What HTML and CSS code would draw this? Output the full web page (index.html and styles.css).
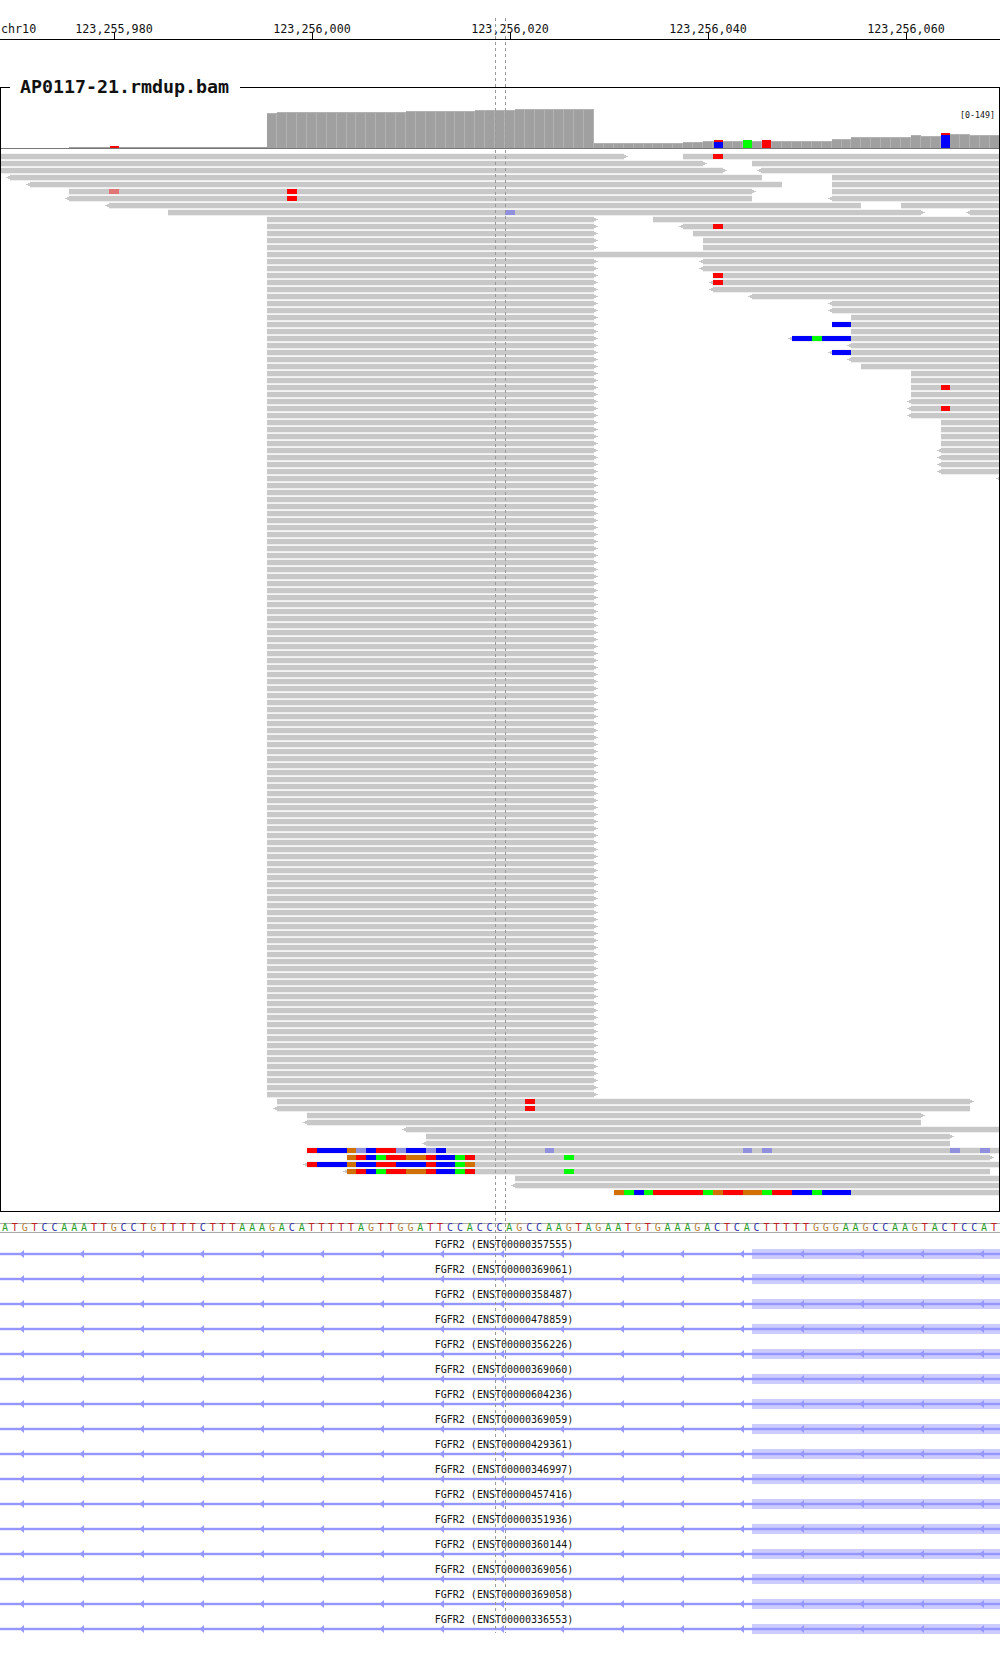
FILE: index.html
```html
<!DOCTYPE html>
<html lang="en">
<head>
    <meta charset="UTF-8">
    <meta name="viewport" content="width=device-width, initial-scale=1.0">
    <title>IGV snapshot</title>
    <link rel="stylesheet" href="styles.css">
</head>
<body>
    <div class="page">
        <div class="ruler">
            <div class="chrom">chr10</div>
            <div class="tick">123,255,980</div>
            <div class="tick">123,256,000</div>
            <div class="tick">123,256,020</div>
            <div class="tick">123,256,040</div>
            <div class="tick">123,256,060</div>
        </div>

        <fieldset class="track">
            <legend>AP0117-21.rmdup.bam</legend>
            <svg id="pileup" class="pileup" width="998" height="1114" viewBox="1 97 998 1114"></svg>
        </fieldset>

        <div id="sequence" class="sequence"></div>
        <div id="genes" class="genes"></div>

        <!-- center lines -->
        <div class="marker marker-left"></div>
        <div class="marker marker-right"></div>
    </div>

    <script src="app.js"></script>
</body>
</html>
```

FILE: styles.css
```css
body {
    margin: 0;
    background-color: #fff;
    color: #111;
    font-family: "DejaVu Sans Mono", monospace;
}

.page {
    position: relative;
    width: 1000px;
    height: 1653px;
    overflow: hidden;
}

.ruler {
    display: flex;
    height: 39px;
    padding-left: 15px;
    border-bottom: 1px solid #000;
    font-size: 11.7px;
    line-height: 14px;
}

.chrom {
    width: 0;
    margin-left: -14px;
    margin-right: 14px;
    padding-top: 22px;
}

.tick {
    position: relative;
    flex: 0 0 198px;
    padding-top: 22px;
    text-align: center;
}

.tick::after {
    content: "";
    position: absolute;
    left: 99px;
    bottom: 0;
    width: 1px;
    height: 7px;
    background-color: #000;
}

.track {
    margin: 37px 0 0;
    padding: 0;
    height: 1135px;
    box-sizing: border-box;
    border: 1px solid #000;
    min-width: 0;
}

.track legend {
    margin-left: 9px;
    padding: 0 10px;
    font-size: 18.3px;
    font-weight: bold;
    line-height: 20px;
    width: 230px;
    box-sizing: border-box;
}

.pileup {
    display: block;
    shape-rendering: crispEdges;
}

.range-label {
    font-family: "DejaVu Sans Mono", monospace;
    font-size: 8.3px;
    fill: #111;
}

.read { fill: #c8c8c8; shape-rendering: auto; }
.cov { fill: #a0a0a0; }
.cov-gap { fill: #b2b2b2; }
.baseline { fill: #777; }
.A { fill: #00ff00; }
.C { fill: #0000ff; }
.G { fill: #d17105; }
.T { fill: #ff0000; }
.P { fill: #9090dd; }
.K { fill: #e07575; }

.sequence {
    display: grid;
    grid-template-columns: repeat(101, 9.9px);
    height: 8px;
    margin-top: 11px;
    border-top: 1px solid #aaa;
    border-bottom: 1px solid #aaa;
    font-family: "DejaVu Sans Mono", monospace;
    font-size: 10px;
    line-height: 8px;
    text-align: center;
}

.base-A { color: #2a9d2a; }
.base-C { color: #2f2fa0; }
.base-G { color: #b57f3c; }
.base-T { color: #b82222; }

.genes {
    margin-top: 6px;
}

.gene {
    height: 25px;
}

.gene-name {
    height: 10px;
    padding-left: 8px;
    font-size: 10px;
    line-height: 12px;
    text-align: center;
}

.gene svg {
    display: block;
}

.exon { fill: #ccccff; }
.intron { fill: #9696ff; }

.marker {
    position: absolute;
    top: 18px;
    width: 1px;
    height: 1615px;
    background: repeating-linear-gradient(#999 0, #999 3px, transparent 3px, transparent 6px);
}

.marker-left { left: 495px; }
.marker-right { left: 505px; }
```

FILE: app.js
```js
const NS = 'http://www.w3.org/2000/svg';

function add(parent, tag, attrs) {
    const el = document.createElementNS(NS, tag);
    for (const key in attrs) {
        el.setAttribute(key, attrs[key]);
    }
    parent.appendChild(el);
    return el;
}

function box(parent, cls, x1, x2, y, h) {
    add(parent, 'rect', { class: cls, x: x1, y: y, width: x2 - x1, height: h });
}

const pileup = document.getElementById('pileup');

// coverage: [from, to, top]
const coverage = [
    [267, 277, 113], [277, 406, 112], [406, 475, 111], [475, 515, 110], [515, 594, 109],
    [594, 683, 143], [683, 703, 142], [703, 832, 141], [832, 851, 139], [851, 911, 137],
    [911, 921, 135], [921, 950, 136], [950, 970, 134], [970, 1000, 135]
];

box(pileup, 'cov', 69, 267, 147, 1);
coverage.forEach(function (c) {
    box(pileup, 'cov-gap', c[0], c[1], c[2], 148 - c[2]);
    for (let n = 0; n < 101; n++) {
        const a = Math.round(n * 9.9);
        const b = Math.round((n + 1) * 9.9) - 1;
        if (a >= c[0] - 1 && b <= c[1] + 1) {
            box(pileup, 'cov', a, b, c[2] + 1, 147 - c[2]);
        }
    }
});
box(pileup, 'baseline', 0, 1000, 148, 1);

box(pileup, 'T', 110, 119, 146, 2);
box(pileup, 'T', 714, 723, 140, 2);
box(pileup, 'C', 714, 723, 142, 6);
box(pileup, 'A', 743, 752, 140, 8);
box(pileup, 'T', 762, 771, 140, 8);
box(pileup, 'T', 941, 950, 133, 2);
box(pileup, 'C', 941, 950, 135, 13);

add(pileup, 'text', { class: 'range-label', x: 960, y: 118 }).textContent = '[0-149]';

// reads: [row, from, to, strand, marks], marks are [color, from, to]
const reads = [
    [0, 0, 624, '>'], [0, 683, 1000, '', [['T', 713, 723]]],
    [1, 0, 703, '>'], [1, 752, 1000],
    [2, 0, 723, '>'], [2, 761, 1000, '<'],
    [3, 10, 762, '<'], [3, 832, 1000],
    [4, 30, 782, '<'], [4, 832, 1000],
    [5, 69, 752, '>', [['K', 109, 119], ['T', 287, 297]]], [5, 832, 1000],
    [6, 69, 752, '<', [['T', 287, 297]]], [6, 832, 1000, '<'],
    [7, 109, 861, '<'], [7, 901, 1000],
    [8, 168, 921, '>', [['P', 505, 515]]], [8, 970, 1000, '<'],
    [9, 653, 1000],
    [10, 683, 1000, '<', [['T', 713, 723]]],
    [11, 693, 1000],
    [12, 703, 1000],
    [13, 703, 1000],
    [14, 267, 1000],
    [15, 703, 1000, '<'],
    [16, 703, 1000, '<'],
    [17, 713, 1000, '', [['T', 713, 723]]],
    [18, 713, 1000, '<', [['T', 713, 723]]],
    [19, 713, 1000, '<'],
    [20, 752, 1000, '<'],
    [21, 832, 1000, '<'],
    [22, 832, 1000, '<'],
    [23, 851, 1000],
    [24, 832, 1000, '', [['C', 832, 851]]],
    [25, 851, 1000],
    [26, 792, 1000, '<', [['C', 792, 812], ['A', 812, 822], ['C', 822, 851]]],
    [27, 851, 1000, '<'],
    [28, 832, 1000, '<', [['C', 832, 851]]],
    [29, 851, 1000, '<'],
    [30, 861, 1000],
    [31, 911, 1000],
    [32, 911, 1000],
    [33, 911, 1000, '', [['T', 941, 950]]],
    [34, 911, 1000],
    [35, 911, 1000, '<'],
    [36, 911, 1000, '<', [['T', 941, 950]]],
    [37, 911, 1000, '<'],
    [38, 941, 1000],
    [39, 941, 1000],
    [40, 941, 1000],
    [41, 941, 1000],
    [42, 941, 1000, '<'],
    [43, 941, 1000, '<'],
    [44, 941, 1000, '<'],
    [45, 941, 1000, '<'],
    [46, 1000, 1004, '<'],
    [135, 277, 970, '>', [['T', 525, 535]]],
    [136, 277, 970, '<', [['T', 525, 535]]],
    [137, 307, 921, '>'],
    [138, 307, 921, '<'],
    [139, 406, 1000, '<'],
    [140, 426, 950, '>'],
    [141, 426, 950, '<'],
    [142, 307, 1000, '', [
        ['T', 307, 317], ['C', 317, 347], ['G', 347, 356], ['P', 356, 366], ['C', 366, 376],
        ['T', 376, 396], ['P', 396, 406], ['C', 406, 426], ['P', 426, 436], ['C', 436, 446],
        ['P', 545, 554], ['P', 743, 752], ['P', 762, 772], ['P', 950, 960], ['P', 980, 990]
    ]],
    [143, 347, 990, '>', [
        ['G', 347, 356], ['T', 356, 366], ['C', 366, 376], ['A', 376, 386], ['T', 386, 406],
        ['G', 406, 426], ['T', 426, 436], ['C', 436, 455], ['A', 455, 465], ['T', 465, 475],
        ['A', 564, 574]
    ]],
    [144, 307, 1000, '<', [
        ['T', 307, 317], ['C', 317, 347], ['G', 347, 356], ['C', 356, 376], ['T', 376, 396],
        ['C', 396, 426], ['T', 426, 436], ['C', 436, 455], ['A', 455, 465], ['G', 465, 475]
    ]],
    [145, 347, 990, '<', [
        ['G', 347, 356], ['T', 356, 366], ['C', 366, 376], ['A', 376, 386], ['T', 386, 406],
        ['G', 406, 426], ['T', 426, 436], ['C', 436, 455], ['A', 455, 465], ['T', 465, 475],
        ['A', 564, 574]
    ]],
    [146, 515, 1000],
    [147, 515, 1000, '<'],
    [148, 614, 1000, '', [
        ['G', 614, 624], ['A', 624, 634], ['C', 634, 644], ['A', 644, 653], ['T', 653, 703],
        ['A', 703, 713], ['G', 713, 723], ['T', 723, 743], ['G', 743, 762], ['A', 762, 772],
        ['T', 772, 792], ['C', 792, 812], ['A', 812, 822], ['C', 822, 851]
    ]]
];

// the big stack of reads that all end at the same base
for (let row = 9; row <= 134; row++) {
    if (row !== 14) {
        reads.push([row, 267, 594, '>']);
    }
}

reads.forEach(function (read) {
    const y = 154 + read[0] * 7;
    const from = read[1];
    const to = read[2];
    box(pileup, 'read', from, to, y - 0.2, 5.5);
    if (read[3] === '>') {
        box(pileup, 'read', to, to + 2, y + 1, 3);
        box(pileup, 'read', to + 2, to + 4, y + 2, 1);
    }
    if (read[3] === '<') {
        box(pileup, 'read', from - 2, from, y + 1, 3);
        box(pileup, 'read', from - 4, from - 2, y + 2, 1);
    }
    (read[4] || []).forEach(function (m) {
        box(pileup, m[0], m[1], m[2], y, 5);
    });
});

// reference sequence
const bases = 'ATGTCCAAATTGCCTGTTTTCTTTAAAGACATTTTTAGTTGGATTCCACC' +
    'CAGCCAAGTAGAATGTGAAAGACTCACTTTTTGGGAAGCCAAGTACTCCAT';
const sequence = document.getElementById('sequence');
bases.split('').forEach(function (b) {
    const cell = document.createElement('span');
    cell.className = 'base-' + b;
    cell.textContent = b;
    sequence.appendChild(cell);
});

// gene track
const transcripts = [
    '357555', '369061', '358487', '478859', '356226', '369060', '604236', '369059',
    '429361', '346997', '457416', '351936', '360144', '369056', '369058', '336553'
];
const genes = document.getElementById('genes');
transcripts.forEach(function (id) {
    const gene = document.createElement('div');
    gene.className = 'gene';
    const name = document.createElement('div');
    name.className = 'gene-name';
    name.textContent = 'FGFR2 (ENST00000' + id + ')';
    gene.appendChild(name);

    const svg = add(gene, 'svg', { width: 1000, height: 11 });
    box(svg, 'exon', 752, 1000, 0, 10);
    box(svg, 'intron', 0, 1000, 3.8, 2.4);
    for (let x = 23; x < 1000; x += 60) {
        add(svg, 'polygon', {
            class: 'intron',
            points: (x - 3.5) + ',5 ' + (x + 1) + ',1 ' + (x + 1) + ',9'
        });
    }
    genes.appendChild(gene);
});
```
